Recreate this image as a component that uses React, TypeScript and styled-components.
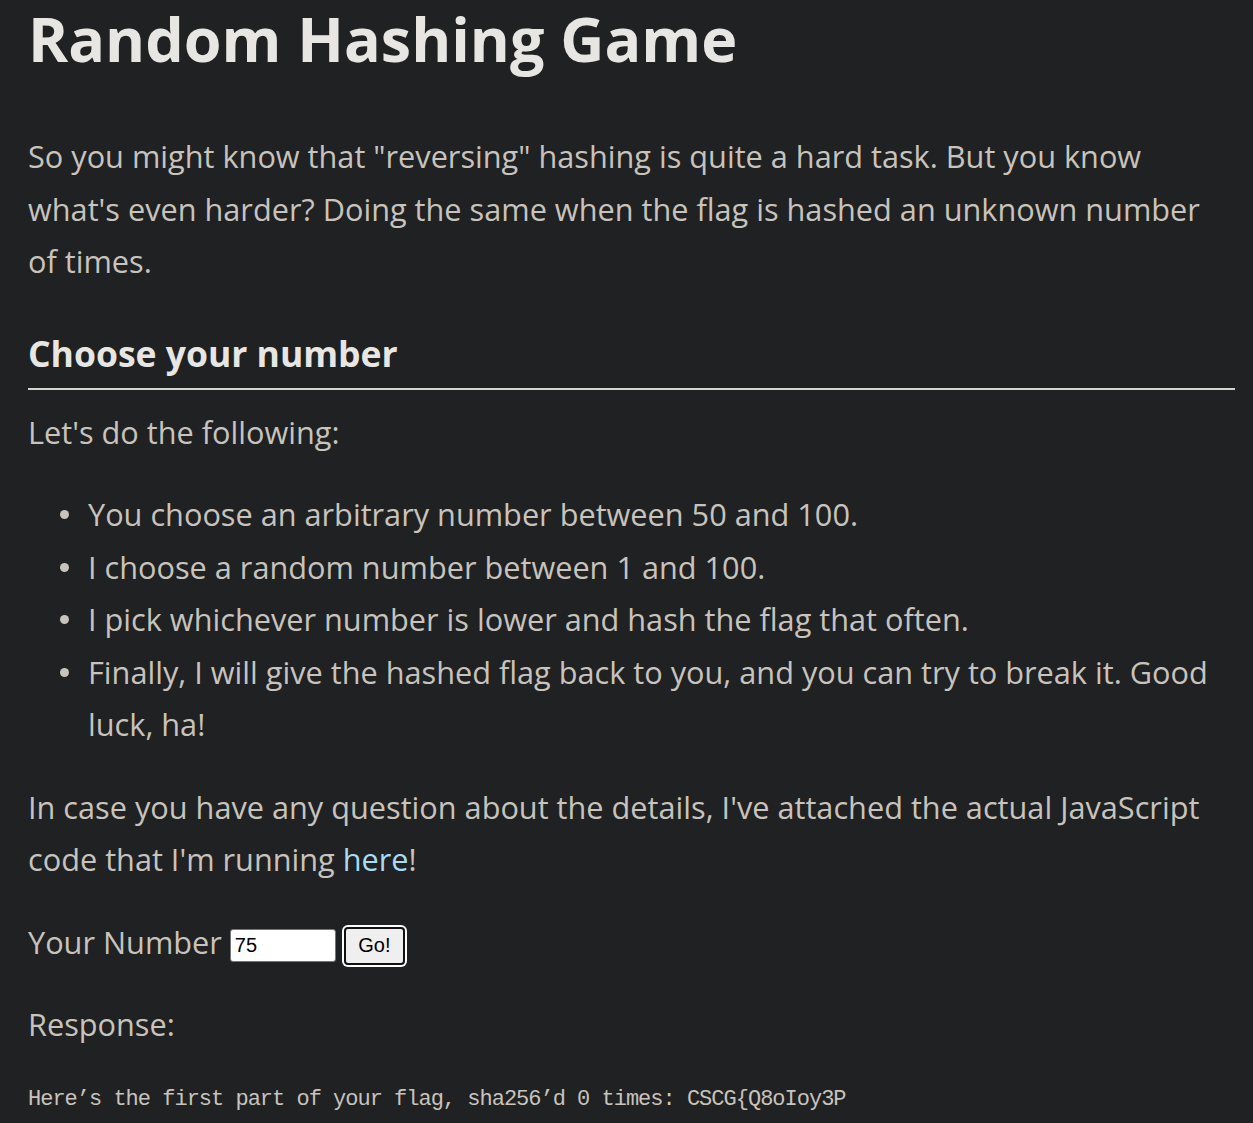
import React from 'react';
import styled, { createGlobalStyle } from 'styled-components';

const GlobalStyle = createGlobalStyle`
  html, body {
    margin: 0;
    background: #1f2123;
  }
  body {
    font-family: "Open Sans", "Noto Sans", sans-serif;
    color: #c8c3bc;
  }
`;

const Page = styled.main`
  padding: 0 18px 0 28px;
  font-size: 30.7px;
  line-height: 52.5px;
`;

const Title = styled.h1`
  margin: 0;
  font-size: 61px;
  line-height: 78px;
  font-weight: 700;
  color: #e8e6e3;
`;

const Para = styled.p<{ $top: number }>`
  margin: ${(p) => p.$top}px 0 0;
`;

const SubHeading = styled.h2`
  margin: 40px 0 0;
  padding-bottom: 10px;
  font-size: 35.5px;
  line-height: 50px;
  font-weight: 700;
  color: #e8e6e3;
  border-bottom: 2px solid #d6d3cf;
`;

const Steps = styled.ul`
  margin: 30px 0 0;
  padding-left: 60px;
  list-style: none;
`;

const Step = styled.li`
  position: relative;

  &::before {
    content: '';
    position: absolute;
    left: -28px;
    top: 22px;
    width: 9px;
    height: 9px;
    border-radius: 50%;
    background: #c8c3bc;
  }
`;

const Link = styled.a`
  color: #a8dcf2;
  text-decoration: none;
`;

const FormRow = styled.form`
  margin-top: 30px;
  display: flex;
  align-items: center;
  gap: 8px;
`;

const NumberInput = styled.input`
  box-sizing: border-box;
  width: 106px;
  height: 33px;
  margin-top: 8px;
  padding: 2px 4px;
  border: 1px solid #767676;
  border-radius: 3px;
  background: #fff;
  color: #000;
  font-family: "Liberation Sans", Arial, sans-serif;
  font-size: 20px;
`;

const GoButton = styled.button`
  box-sizing: border-box;
  width: 61px;
  height: 38px;
  margin-top: 8px;
  border: 2px solid #111;
  border-radius: 4px;
  box-shadow: 0 0 0 2px #fff;
  background: #efefef;
  color: #000;
  font-family: "Liberation Sans", Arial, sans-serif;
  font-size: 20px;
`;

const Output = styled.pre`
  margin: 34px 0 0;
  font-family: "Liberation Mono", monospace;
  font-size: 22px;
  letter-spacing: -1px;
  line-height: 30px;
  color: #c8c3bc;
`;

export default function App() {
  return (
    <>
      <GlobalStyle />
      <Page>
        <Title>Random Hashing Game</Title>
        <Para $top={52}>
          So you might know that "reversing" hashing is quite a hard task. But you know
          what's even harder? Doing the same when the flag is hashed an unknown number of
          times.
        </Para>
        <SubHeading>Choose your number</SubHeading>
        <Para $top={16}>Let's do the following:</Para>
        <Steps>
          <Step>You choose an arbitrary number between 50 and 100.</Step>
          <Step>I choose a random number between 1 and 100.</Step>
          <Step>I pick whichever number is lower and hash the flag that often.</Step>
          <Step>
            Finally, I will give the hashed flag back to you, and you can try to break it.
            Good luck, ha!
          </Step>
        </Steps>
        <Para $top={30}>
          In case you have any question about the details, I've attached the actual
          JavaScript code that I'm running <Link href="#">here</Link>!
        </Para>
        <FormRow onSubmit={(e) => e.preventDefault()}>
          <span>Your Number</span>
          <NumberInput type="text" defaultValue="75" />
          <GoButton type="submit">Go!</GoButton>
        </FormRow>
        <Para $top={30}>Response:</Para>
        <Output>Here’s the first part of your flag, sha256’d 0 times: CSCG{'{'}Q8oIoy3P</Output>
      </Page>
    </>
  );
}
